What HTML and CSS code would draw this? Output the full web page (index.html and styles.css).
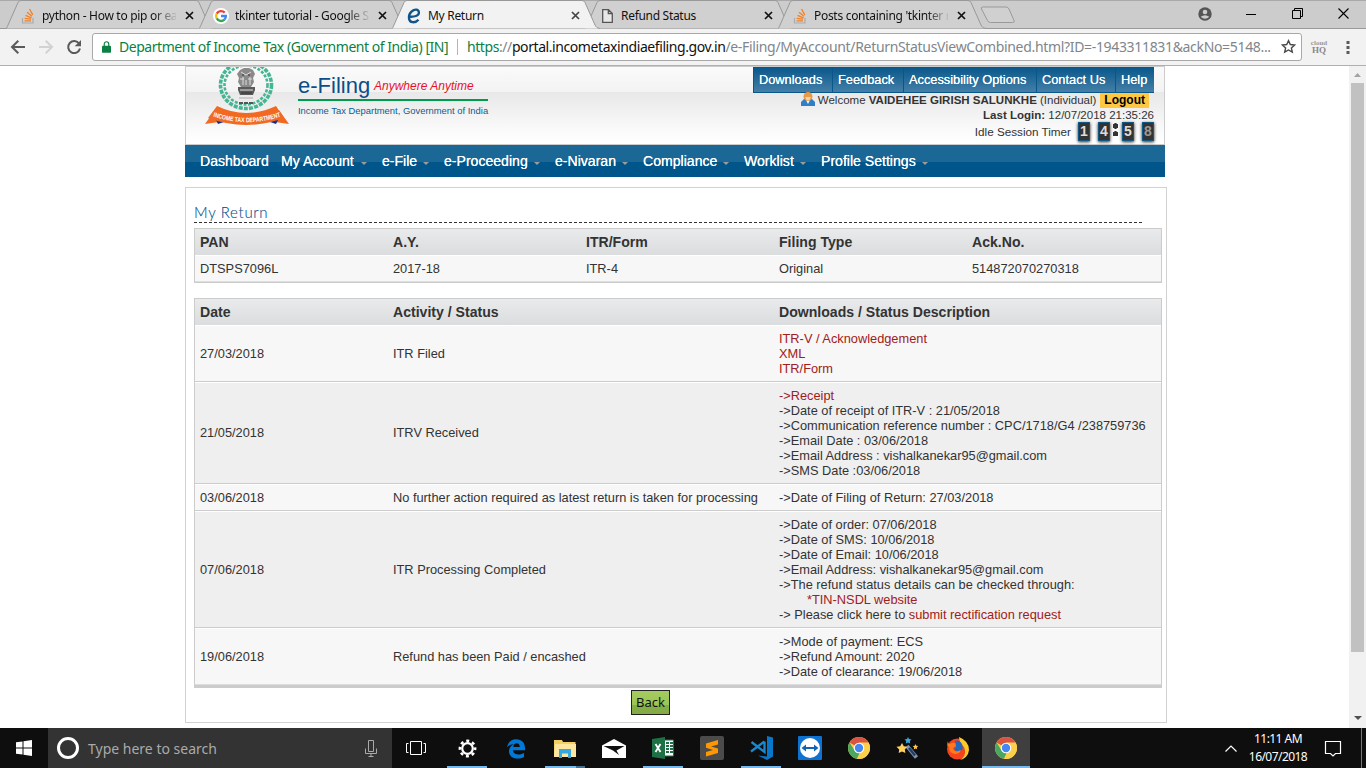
FILE: index.html
```html
<!DOCTYPE html>
<html lang="en">
<head>
<meta charset="utf-8">
<title>My Return</title>
<link rel="stylesheet" href="styles.css">
</head>
<body>
<svg class="defs" width="0" height="0">
  <symbol id="so" viewBox="0 0 16 16"><path d="M2.500 10v5h10.500v-5" fill="none" stroke="#a9abae" stroke-width="1.200"/><path d="M4.500 12.800h6.500M4.700 10.300l6.400.9M5.500 7.400l6 2.400M7 4.200l5 4.100M9.500 1l3.300 5.900" stroke="#f48024" stroke-width="1.300"/></symbol>
  <symbol id="x" viewBox="0 0 9 9"><path d="M1 1l7 7M8 1L1 8" stroke="currentColor" stroke-width="1.700"/></symbol>
  <symbol id="tab" viewBox="0 0 208 29"><path d="M0 28.500C1 28 1 27 2 25L12 2.500Q13 .5 15 .5H190Q192 .5 193 2.500L203 25C204 27 205 28 208 28.500" stroke="#999" stroke-width="1"/></symbol>
  <symbol id="chrome" viewBox="0 0 22 22"><circle cx="11" cy="11" r="11" fill="#fcd04b"/><path d="M11 11L1.500 5.500A11 11 0 0 1 20.500 5.500z" fill="#d95442"/><path d="M1.500 5.500L7 14l4.500 2-2.500 5.800A11 11 0 0 1 1.500 5.500z" fill="#4aa760"/><path d="M11 5.500h9.500A11 11 0 0 1 9 21.800L15 14z" fill="#fcd04b"/><circle cx="11" cy="11" r="5.300" fill="#fff"/><circle cx="11" cy="11" r="4.200" fill="#4688f1"/></symbol>
  <symbol id="e" viewBox="0 0 20 20"><path d="M1 9C2 3.500 5.500.8 10.200.8c5.500 0 8.800 3.800 8.800 8.700v2.200H7c.2 3 2.500 4.300 5.500 4.300 2.200 0 4-.6 5.500-1.500v4c-1.800 1-4 1.500-6.500 1.500C6 20 3 16.800 3 12.700 3 9.500 4.800 7 7.800 5.700 5 5.600 2.600 7 1 9zm6.200-.5h6.600C13.800 6 12.600 4.700 10.700 4.700S7.500 6.200 7.200 8.500z" fill="#0078d7"/></symbol>
</svg>

<header class="browser">
  <div class="tabs">
    <div class="tab"><svg class="shape"><use href="#tab"/></svg><div class="tab-in"><svg class="fav"><use href="#so"/></svg><span class="label fade">python - How to pip or ea</span><svg class="close"><use href="#x"/></svg></div></div>
    <div class="tab"><svg class="shape"><use href="#tab"/></svg><div class="tab-in"><svg class="fav" viewBox="0 0 16 16"><circle cx="8" cy="8" r="8" fill="#fff"/><g fill="none" stroke-width="2.300"><path d="M3.700 5.600A5 5 0 0 1 11.700 4.600" stroke="#ea4335"/><path d="M3.700 5.600a5 5 0 0 0 0 4.800" stroke="#fbbc05"/><path d="M3.700 10.400a5 5 0 0 0 7.700 1.300" stroke="#34a853"/><path d="M8 8h4.900a5 5 0 0 1-1.500 3.700" stroke="#4285f4"/></g></svg><span class="label fade">tkinter tutorial - Google S</span><svg class="close"><use href="#x"/></svg></div></div>
    <div class="tab active"><svg class="shape"><use href="#tab"/></svg><div class="tab-in"><svg class="fav" viewBox="0 0 16 16"><path d="M3.500 8.700C8 9 13 8 12.900 4.600 12.700 1 8.500.8 5.500 3.700 1.800 7.200 2 13.800 6.700 14.200c2.300.2 4.500-1 5.800-2.500" fill="none" stroke="#10548c" stroke-width="2.300"/></svg><span class="label">My Return</span><svg class="close"><use href="#x"/></svg></div></div>
    <div class="tab"><svg class="shape"><use href="#tab"/></svg><div class="tab-in"><svg class="fav" viewBox="0 0 16 16"><path d="M3.700 1.700H9.500L13.300 5.500V14.300H3.700zM9.300 1.700v4h4" fill="#e8e8e8" stroke="#555" stroke-width="1.300"/></svg><span class="label">Refund Status</span><svg class="close"><use href="#x"/></svg></div></div>
    <div class="tab"><svg class="shape"><use href="#tab"/></svg><div class="tab-in"><svg class="fav"><use href="#so"/></svg><span class="label fade">Posts containing 'tkinter r</span><svg class="close"><use href="#x"/></svg></div></div>
    <svg class="newtab" viewBox="0 0 36 18"><path d="M2.500 1H26q2 0 3 2l5 11.500q.8 2-1.500 2H10.500q-2 0-3-2L1.500 3Q.8 1 2.500 1z" fill="#d0d0d0" stroke="#999"/></svg>
    <div class="winctl">
      <svg width="14" height="14" viewBox="0 0 14 14"><circle cx="7" cy="7" r="6.700" fill="#555"/><circle cx="7" cy="5" r="2.300" fill="#ccc"/><path d="M2.700 9.800Q7 6.700 11.300 9.800 7 13.500 2.700 9.800z" fill="#ccc"/></svg>
      <svg width="10" height="10"><path d="M0 5.500h10" stroke="#000"/></svg>
      <svg width="11" height="11" fill="none" stroke="#000"><path d="M.5 2.500h8v8h-8zM2.500 2.500v-2h8v8h-2"/></svg>
      <svg width="11" height="11"><path d="M.5.500l10 10M10.500.500l-10 10" stroke="#000" stroke-width="1.100"/></svg>
    </div>
  </div>
  <div class="toolbar">
    <svg class="tb back" width="16" height="16" viewBox="0 0 16 16" fill="none" stroke="#5a5a5a" stroke-width="2"><path d="M15 8H2.500M8.300 1.700L2 8l6.300 6.300"/></svg>
    <svg class="tb" width="16" height="16" viewBox="0 0 16 16" fill="none" stroke="#d2d2d2" stroke-width="2"><path d="M1 8h12.500M7.700 1.700L14 8l-6.300 6.300"/></svg>
    <svg class="tb" width="16" height="16" viewBox="0 0 16 16"><path d="M13.200 4.700A6 6 0 1 0 14 9.600" fill="none" stroke="#5a5a5a" stroke-width="2"/><path d="M15 1v6.300H8.700z" fill="#5a5a5a"/></svg>
    <div class="omni">
      <svg class="lock" width="9" height="12" viewBox="0 0 10 13"><path d="M1 5h8q1 0 1 1v6q0 1-1 1H1q-1 0-1-1V6q0-1 1-1z" fill="#0b8043"/><path d="M2.500 5.500V3.200a2.500 2.500 0 0 1 5 0v2.300" fill="none" stroke="#0b8043" stroke-width="1.300"/></svg>
      <span class="org">Department of Income Tax (Government of India) [IN]</span>
      <i class="bar"></i>
      <span class="url"><span class="sec">https</span>://<b>portal.incometaxindiaefiling.gov.in</b><span class="path">/e-Filing/MyAccount/ReturnStatusViewCombined.html?ID=-1943311831&amp;ackNo=5148...</span></span>
      <svg class="star" width="15" height="15" viewBox="0 0 15 15"><path d="M7.500 1.600l1.800 3.900 4.300.5-3.200 2.900.9 4.200-3.800-2.100-3.800 2.100.9-4.200L1.400 6l4.300-.5z" fill="none" stroke="#4a4a4a" stroke-width="1.400"/></svg>
    </div>
    <div class="cloud"><span>cloud</span><b>HQ</b></div>
    <svg class="dots" width="4" height="14"><path d="M.5 1h3v3h-3zM.5 6h3v3h-3zM.5 11h3v3h-3z" fill="#5a5a5a"/></svg>
  </div>
</header>

<div class="viewport">
  <main class="page">
    <div class="banner">
      <svg class="logo" width="84" height="60" viewBox="0 0 84 60">
        <g fill="none" stroke="#45b594"><ellipse cx="41" cy="18" rx="25.500" ry="23.500" stroke-width="3.600" stroke-dasharray="4 1.200"/><ellipse cx="41" cy="18" rx="21.500" ry="19.500" stroke-width="2.600" stroke-dasharray="3 1.500"/></g>
        <path d="M35 3l4-2h5l4 2 2 4-2 4 1 4-3 5H36l-3-5 1-4-2-4z" fill="#8a8a8a"/><path d="M33 20h17v3l-2 5H35l-2-5z" fill="#5a5a5a"/><path d="M36 5l5 3 5-3M35 12h4M43 12h4M38 10v8M41 13v5M45 10v8M35 23h13" stroke="#ddd" fill="none"/><path d="M37 8h2M43 8h2M36 26h11" stroke="#333"/><path d="M34 31h14" stroke="#aaa"/><path d="M34 36h15" stroke="#555" stroke-width="2" stroke-dasharray="4 1"/>
        <path d="M0 57l14-2-4-12zM84 57l-14-2 4-12z" fill="#f26a21"/><path d="M10 51l3 6 6-2zM74 51l-3 6-6-2z" fill="#1b2f91"/>
        <path d="M12 39Q41 53 71 39L79 51Q41 65 3 51z" fill="#f26a21"/>
        <path id="arc" d="M8 49.500Q42 61 76 49.500" fill="none"/>
        <text class="ribbon"><textPath href="#arc" textLength="69" lengthAdjust="spacingAndGlyphs">INCOME TAX DEPARTMENT</textPath></text>
      </svg>
      <div class="brand">
        <div class="brand-top"><span class="efiling">e-Filing</span><em>Anywhere Anytime</em></div>
        <div class="dept">Income Tax Department, Government of India</div>
      </div>
      <div class="user">
        <nav class="quick"><a class="q1">Downloads</a><a class="q2">Feedback</a><a class="q3">Accessibility Options</a><a class="q4">Contact Us</a><a class="q5">Help</a></nav>
        <div class="welcome"><svg width="14" height="14" viewBox="0 0 14 14"><path d="M0 14V10l3-3h8l3 3v4z" fill="#2f7fca"/><path d="M5 8l2 4 2-4z" fill="#fff"/><circle cx="7" cy="4.500" r="4.500" fill="#e99a45"/><path d="M4.500 5h5q0 3-2.500 3.500Q4.500 8 4.500 5z" fill="#ffd3a0"/></svg><span class="wtext">Welcome <b>VAIDEHEE GIRISH SALUNKHE</b> (Individual)</span><b class="logout">Logout</b></div>
        <div class="last"><b>Last Login:</b> 12/07/2018 21:35:26</div>
        <div class="idle"><span>Idle Session Timer</span><b class="d">1</b><b class="d">4</b><i class="colon"></i><b class="d">5</b><b class="d dim">8</b></div>
      </div>
    </div>
    <nav class="menu">
      <a class="m1">Dashboard</a><a class="m2 dd">My Account</a><a class="m3 dd">e-File</a><a class="m4 dd">e-Proceeding</a><a class="m5 dd">e-Nivaran</a><a class="m6 dd">Compliance</a><a class="m7 dd">Worklist</a><a class="m8 dd">Profile Settings</a>
    </nav>
    <section class="content">
      <h1>My Return</h1>
      <div class="table first">
        <div class="row head five"><div>PAN</div><div>A.Y.</div><div>ITR/Form</div><div>Filing Type</div><div>Ack.No.</div></div>
        <div class="row five"><div>DTSPS7096L</div><div>2017-18</div><div>ITR-4</div><div>Original</div><div>514872070270318</div></div>
      </div>
      <div class="table second">
        <div class="row head"><div>Date</div><div>Activity / Status</div><div>Downloads / Status Description</div></div>
        <div class="row"><div>27/03/2018</div><div>ITR Filed</div><div><a>ITR-V / Acknowledgement</a><br><a>XML</a><br><a>ITR/Form</a></div></div>
        <div class="row even"><div>21/05/2018</div><div>ITRV Received</div><div><a>-&gt;Receipt</a><br>-&gt;Date of receipt of ITR-V : 21/05/2018<br>-&gt;Communication reference number : CPC/1718/G4 /238759736<br>-&gt;Email Date : 03/06/2018<br>-&gt;Email Address : vishalkanekar95@gmail.com<br>-&gt;SMS Date :03/06/2018</div></div>
        <div class="row"><div>03/06/2018</div><div>No further action required as latest return is taken for processing</div><div>-&gt;Date of Filing of Return: 27/03/2018</div></div>
        <div class="row even"><div>07/06/2018</div><div>ITR Processing Completed</div><div>-&gt;Date of order: 07/06/2018<br>-&gt;Date of SMS: 10/06/2018<br>-&gt;Date of Email: 10/06/2018<br>-&gt;Email Address: vishalkanekar95@gmail.com<br>-&gt;The refund status details can be checked through:<br><a class="indent">*TIN-NSDL website</a><br>-&gt; Please click here to <a>submit rectification request</a></div></div>
        <div class="row"><div>19/06/2018</div><div>Refund has been Paid / encashed</div><div>-&gt;Mode of payment: ECS<br>-&gt;Refund Amount: 2020<br>-&gt;Date of clearance: 19/06/2018</div></div>
      </div>
      <button class="back-btn">Back</button>
    </section>
  </main>
  <div class="scroll"><svg width="7" height="4"><path d="M0 4L3.500 0 7 4z" fill="#a3a3a3"/></svg><i></i><svg width="8" height="4"><path d="M0 0h8L4 4z" fill="#505050"/></svg></div>
</div>

<footer class="taskbar">
  <div class="start"><svg width="16" height="16" fill="#fff"><path d="M0 2.300L6.500 1.400V7.500H0zM7.500 1.200L16 0V7.500H7.500zM0 8.500H6.500v6.100L0 13.700zM7.500 8.500H16V16L7.500 14.800z"/></svg></div>
  <div class="search"><i class="ring"></i><span>Type here to search</span><svg width="12" height="17" fill="none" stroke="#aaa"><path d="M3.500.5h5v11h-5zM.500 8.500v5h11v-5M6 13.500v3M3.500 16.500h5"/></svg></div>
  <div class="view"><svg width="20" height="15" fill="none" stroke="#fff"><path d="M4.500.5h11v13h-11zM2.500 2.500h-2v9h2M17.500 2.500h2v9h-2"/></svg></div>
  <div class="apps">
    <div class="on"><svg width="19" height="19" viewBox="0 0 19 19" fill="none" stroke="#fff"><circle cx="9.500" cy="9.500" r="7.600" stroke-width="2.600" stroke-dasharray="3 2.970" stroke-dashoffset="1.500"/><circle cx="9.500" cy="9.500" r="5.300" stroke-width="2.200"/></svg></div>
    <div><svg width="20" height="21" viewBox="0 0 20 21"><use href="#e" width="20" height="21"/></svg></div>
    <div class="on group"><svg width="22" height="19" viewBox="0 0 22 19"><path d="M0 1h8l1 2h12.500v15H0z" fill="#f5cf60"/><path d="M1 5h21v13H0z" fill="#fde6a0"/><path d="M5 19v-9h12v9h-3v-4.500H8V19z" fill="#35a8e0"/></svg></div>
    <div><svg width="24" height="19" viewBox="0 0 24 19"><path d="M0 6.500L12 0l12 6.500V19H0z" fill="#fff"/><path d="M1.500 7h21L14.500 11.500 17 16 11 11.500z" fill="#111"/></svg></div>
    <div class="on"><svg width="22" height="22" viewBox="0 0 22 22"><path d="M12 3h9.500v16H12z" fill="#fff" stroke="#1e7145"/><path d="M14 5h3v2h-3zM18 5h3v2h-3zM14 8h3v2h-3zM18 8h3v2h-3zM14 11h3v2h-3zM18 11h3v2h-3zM14 14h3v2h-3zM18 14h3v2h-3z" fill="#1e7145"/><path d="M0 2l13-2v22L0 20z" fill="#1e7145"/><path d="M3.500 7l5 8M8.500 7l-5 8" stroke="#fff" stroke-width="1.800"/></svg></div>
    <div><svg width="24" height="24" viewBox="0 0 24 24"><rect width="24" height="24" rx="2" fill="#4b4b4b"/><path d="M6 7.500L18 4v4.500L11 10.500l7 2V17L6 20.500V16l7-2-7-2.300z" fill="#ff9800"/></svg></div>
    <div class="on"><svg width="24" height="24" viewBox="0 0 24 24"><path d="M18 0l6 1.500v19l-6 3.500-9-4.500 9 1z" fill="#0877c9"/><path d="M15.500 5.500v10.500L2.500 6M15.500 5.500L2 15.500" fill="none" stroke="#168bd2" stroke-width="2.300"/></svg></div>
    <div><svg width="24" height="24" viewBox="0 0 24 24"><rect width="24" height="24" rx="1" fill="#0e72d2"/><circle cx="12" cy="12" r="10" fill="#fff"/><path d="M3.500 12L8 8.500V11h8V8.500l4.500 3.500-4.500 3.500V13H8v2.500z" fill="#0e65b5"/></svg></div>
    <div><svg width="22" height="22"><use href="#chrome"/></svg></div>
    <div><svg width="24" height="24" viewBox="0 0 24 24"><path d="M11 10l9.500 11.500" stroke="#7d93b4" stroke-width="4"/><path d="M13 12l6 7.500" stroke="#243e63" stroke-width="2.500"/><path d="M6 7l1.800 3.200 3.500.5-2.500 2.700.6 3.600L6 15.500l-3.300 1.500.5-3.600L.500 10.800l3.700-.6z" fill="#ffd05c"/><path d="M12 1l1 2 2.500.4-1.700 1.700.4 2.400L12 6.500 9.800 7.500l.4-2.400L8.500 3.400l2.500-.4z" fill="#3aa9dd"/><path d="M19.500 8l.8 1.700 1.900.3-1.400 1.400.3 1.900-1.600-.8-1.700.9.300-2-1.300-1.400 1.900-.3z" fill="#ffc44d"/></svg></div>
    <div><svg width="23" height="23" viewBox="0 0 23 23"><circle cx="11.500" cy="12" r="10.500" fill="#f5421f"/><path d="M13 0q10 4 10 13-1 8-9 10 6-4 5-10-1-4-4-6-2-4-2-7z" fill="#ffc928"/><path d="M9 4q4-2 7 3 2 5-2 8l-3 0-3-3 2-2 0-3z" fill="#2268bd"/><path d="M2 4q0 3 2 3 2-2 5-1l1 3-3 2q1 4 5 3l3-1q-1 4-6 4-6-1-6-7Q0 9 2 4z" fill="#ff7a1a"/></svg></div>
    <div class="on full"><svg width="22" height="22"><use href="#chrome"/></svg></div>
  </div>
  <div class="tray"><svg width="12" height="7"><path d="M.5 6.500L6 1l5.500 5.500" fill="none" stroke="#fff" stroke-width="1.200"/></svg><div class="clock"><span>11:11 AM</span><span class="date">16/07/2018</span></div><svg class="note" width="17" height="17"><path d="M.5 1.500h15v12H10.500L8 16l-2.500-2.500H.5z" fill="none" stroke="#fff" stroke-width="1.200"/></svg><i></i></div>
</footer>
</body>
</html>
```
FILE: styles.css
```css
* { box-sizing: border-box; }
body { margin: 0; width: 1366px; height: 768px; overflow: hidden; display: flex; flex-direction: column; background: #fff; font-family: "Liberation Sans", Arial, sans-serif; }
svg { display: block; flex: none; overflow: visible; }
.defs { display: none; }

/* Browser frame */
.browser { flex: none; height: 66px; font-family: "Noto Sans", "Open Sans", sans-serif; }
.tabs { height: 29px; background: #ccc; border-bottom: 1px solid #999; border-top: 1px solid #aaa; display: flex; padding-left: 6px; }
.tab { display: grid; width: 208px; height: 29px; margin: -1px -15px 0 0; flex: none; }
.tab > * { grid-area: 1 / 1; }
.shape { width: 208px; height: 29px; fill: #d0d0d0; }
.active { z-index: 2; }
.active .shape { fill: #f2f2f2; }
.tab-in { display: flex; align-items: center; padding: 2px 0 0 14px; z-index: 1; }
.fav { width: 16px; height: 16px; }
.label { margin-left: 6px; width: 134px; font-size: 12px; white-space: nowrap; color: #111; letter-spacing: -.3px; }
.fade { -webkit-mask-image: linear-gradient(to right, #000 112px, transparent 136px); mask-image: linear-gradient(to right, #000 112px, transparent 136px); }
.close { width: 9px; height: 9px; margin-left: 9px; color: #111; }
.active .close { color: #444; }
.newtab { width: 36px; height: 18px; margin: 5px 0 0 9px; }
.winctl { margin-left: auto; display: flex; align-items: center; height: 25px; padding-right: 17px; }
.winctl svg:nth-child(2) { margin-left: 34px; }
.winctl svg:nth-child(3) { margin-left: 36px; }
.winctl svg:nth-child(4) { margin-left: 35px; }
.toolbar { height: 37px; background: #f2f2f2; border-bottom: 1px solid #b0b0b0; display: flex; align-items: center; padding: 0 0 1px 10px; }
.tb { margin-right: 12px; }
.tb + .tb + .tb { margin-right: 10px; }
.omni { width: 1210px; height: 28px; border: 1px solid #a8a8a8; border-radius: 3px; background: #fff; display: flex; align-items: center; padding-left: 9px; font-size: 14px; white-space: nowrap; color: #80868b; }
.org { color: #0b8043; margin-left: 8px; width: 330px; letter-spacing: -.46px; flex: none; }
.bar { width: 1px; height: 16px; background: #b5b5b5; margin: 0 9px 0 8px; flex: none; }
.url { width: 806px; letter-spacing: -.42px; flex: none; }
.url b { font-weight: 400; color: #111; }
.path { letter-spacing: -.33px; }
.sec { color: #0b8043; }
.star { margin-left: 8px; }
.cloud { margin-left: 8px; width: 18px; display: flex; flex-direction: column; align-items: center; font: bold 7px/6px "Liberation Serif", serif; color: #999; }
.cloud b { font-size: 9px; line-height: 8px; color: #888; }
.dots { margin-left: 18px; }

/* Page */
.viewport { height: 662px; flex: none; display: flex; justify-content: space-between; }
.page { width: 982px; margin-left: 185px; font-size: 12.8px; color: #333; }
.banner { width: 980px; height: 79px; border: 1px solid #ccc; display: flex; background: linear-gradient(#fafafa 0, #f3f3f3 25px, #e8e8e8 25px, #fff 74px); }
.logo { margin-left: 19px; overflow: hidden; }
.ribbon { font: bold 6.500px "Liberation Sans", sans-serif; fill: #fff; }
.brand { margin: 8px 0 0 9px; width: 190px; color: #0c4d87; }
.brand-top { display: flex; align-items: baseline; height: 26px; border-bottom: 2px solid #009b4e; white-space: nowrap; line-height: 22px; }
.efiling { font-size: 22px; width: 76px; }
.brand em { color: #e8112d; font-size: 12px; line-height: 20px; margin-top: -2px; align-self: flex-start; padding-top: 3px; }
.dept { font-size: 9.420px; white-space: nowrap; margin-top: 4px; color: #0c5c92; }
.user { margin-left: auto; padding-right: 10px; display: flex; flex-direction: column; align-items: flex-end; white-space: nowrap; font-size: 11.520px; }
.quick { display: flex; height: 26px; background: linear-gradient(#08578a, #447fa8); border-bottom: 1px solid #08578a; color: #fff; font-size: 12.800px; text-shadow: 0 0 .5px #fff; }
.quick a { line-height: 25px; padding-left: 5px; border-left: 1px solid #08578a; }
.q1 { width: 79px; } .q2 { width: 71px; } .q3 { width: 133px; } .q4 { width: 79px; } .q5 { width: 39px; }
.welcome { display: flex; height: 15px; align-items: center; padding-right: 5px; }
.welcome svg { margin: -3px 3px 0 0; }
.wtext { line-height: 14px; padding-bottom: 1px; }
.logout { background: #ffc843; color: #000; font-size: 12px; padding: 0 4px; margin-left: 4px; line-height: 15px; }
.last { line-height: 14px; }
.idle { display: flex; align-items: center; height: 18px; }
.idle span { font-size: 11.700px; }
.d { width: 12px; height: 19px; margin-left: 8px; background: #333; border: 1px solid #15567f; color: #ddd; font-size: 14px; text-align: center; line-height: 17px; box-shadow: 0 1px 3px #222; }
.idle span + .d { margin-left: 7px; }
.dim { color: #999; }
.colon { width: 5px; height: 14px; margin: 0 -4px 5px 3px; background: radial-gradient(circle, #333 2.500px, transparent 3px) 0 0 / 5px 8px; }
.menu { width: 980px; height: 32px; display: flex; background: linear-gradient(#1b6896 17px, #00558a 17px); color: #fff; font-size: 14.080px; line-height: 32px; padding-left: 15px; white-space: nowrap; text-shadow: 0 0 .5px #fff; }
.m1 { width: 81px; } .m2 { width: 101px; } .m3 { width: 62px; } .m4 { width: 111px; } .m5 { width: 88px; } .m6 { width: 101px; } .m7 { width: 77px; } .m8 { width: 107px; }
.dd { display: flex; align-items: center; justify-content: space-between; padding-right: 15px; }
.dd::after { content: ""; border: 3px solid transparent; border-top-color: #9b9b9b; border-bottom: 0; margin-top: 5px; }
.m8 { padding-right: 0; }
.content { margin-top: 10px; width: 982px; height: 536px; border: 1px solid #d2d2d2; padding: 15px 4px 0 8px; display: flex; flex-direction: column; }
h1 { margin: 0 0 5px; width: 948px; height: 20px; background: repeating-linear-gradient(to right, #333 0 3px, transparent 3px 5px) 0 100% / 100% 1px no-repeat; font: 300 15px/19px Lato, sans-serif; color: #00508a; letter-spacing: .7px; -webkit-text-stroke: .1px #00508a; }
.table { width: 968px; border: 1px solid #ccc; }
.first { margin-bottom: 15px; }
.second { border-bottom: 3px solid #ccc; }
.row { display: grid; grid-template-columns: 193px 386px 1fr; align-items: center; line-height: 15px; background: #f7f7f7; border-top: 1px solid #fff; border-bottom: 1px solid #ccc; padding: 5px 0; }
.row > div { padding-left: 5px; white-space: nowrap; }
.five { grid-template-columns: repeat(5, 193px); }
.even { background: #efefef; }
.even > div:not(:last-child) { padding-bottom: 1px; }
.head { height: 26px; padding: 6px 0 4px; border-top: 0; border-bottom: 1px solid #dcdddf; font-weight: bold; font-size: 14.080px; background: linear-gradient(#e8eaeb, #dcdddf); }
.first .row:last-child, .second .row:last-child { border-bottom-color: #ddd; }
.row a { color: #a02020; }
.indent { margin-left: 28px; }
.back-btn { width: 39px; height: 25px; margin: 2px 0 0 437px; padding: 0 0 1px; border: 1px solid #222; border-radius: 0; background: linear-gradient(#a4cb60, #9bc554 60%, #86ae47 60%, #83aa45); color: #111; font: 13px "Noto Sans", sans-serif; }
.scroll { width: 17px; background: #f1f1f1; display: flex; flex-direction: column; align-items: center; padding-top: 7px; }
.scroll i { width: 13px; height: 569px; background: #c1c1c1; margin: 6px 0 64px; }

/* Taskbar */
.taskbar { height: 40px; flex: none; display: flex; background: #0e0e0e; color: #fff; font-family: "Noto Sans", sans-serif; }
.start, .view { width: 48px; display: flex; align-items: center; justify-content: center; }
.search { width: 344px; background: #333; display: flex; align-items: center; padding: 0 15px 0 9px; color: #aaa; font-size: 14px; }
.ring { width: 22px; height: 22px; border: 3px solid #fff; border-radius: 50%; margin-right: 9px; }
.search svg { margin-left: auto; }
.apps { display: flex; gap: 1px; margin-left: 3px; }
.apps > div { width: 48px; height: 40px; display: flex; align-items: center; justify-content: center; }
.on { background: linear-gradient(#76b9ed, #76b9ed) 4px 38px / 40px 2px no-repeat; }
.group { background: linear-gradient(to right, #76b9ed 31px, #456f91 31px) 4px 38px / 40px 2px no-repeat; }
.full { background: linear-gradient(#76b9ed, #76b9ed) 0 38px / 48px 2px no-repeat #3f3f3f; }
.tray { margin-left: auto; display: flex; align-items: center; }
.clock { width: 72px; margin-left: 5px; display: flex; flex-direction: column; align-items: center; font-size: 12px; line-height: 18px; letter-spacing: -.55px; }
.note { margin: 0 19px 0 11px; }
.tray i { width: 1px; height: 40px; background: #777; margin-right: 4px; }
```
